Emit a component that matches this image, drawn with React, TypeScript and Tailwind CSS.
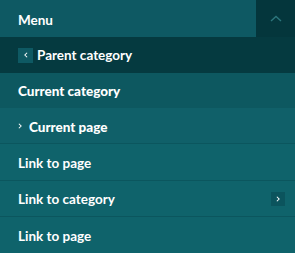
import React from "react";

const Chev = ({ dir, className }: { dir: "left" | "right" | "up"; className?: string }) => {
  const d =
    dir === "left" ? "M5.5 2 L2.5 5 L5.5 8" : dir === "right" ? "M2.5 2 L5.5 5 L2.5 8" : "M1 6 L6 1.5 L11 6";
  const vb = dir === "up" ? "0 0 12 7" : "0 0 8 10";
  return (
    <svg viewBox={vb} className={className} fill="none" stroke="currentColor" strokeWidth={1.4}>
      <path d={d} />
    </svg>
  );
};

export default function App() {
  return (
    <div
      className="w-[295px] h-[253px] overflow-hidden text-white text-[13.5px] bg-[#0f636b]"
      style={{ fontFamily: 'Lato, "Noto Sans", sans-serif' }}
    >
      <div className="flex h-[37px]">
        <div className="flex-1 flex items-center pl-[18px] pt-[3px] bg-[#0e5963] font-bold">Menu</div>
        <div className="w-[39px] flex items-center justify-center bg-[#04363c] text-[#2c767c]">
          <Chev dir="up" className="w-[12px] h-[7px]" />
        </div>
      </div>
      <div className="flex items-center h-[36px] bg-[#053a40] pl-[18px] font-bold">
        <div className="w-[15px] h-[15px] bg-[#0e5963] flex items-center justify-center mr-[4px]">
          <Chev dir="left" className="w-[6px] h-[8px]" />
        </div>
        Parent category
      </div>
      <div className="flex items-center h-[35px] bg-[#0d5860] pl-[18px] pt-[2px] font-black">Current category</div>
      <div className="flex items-center h-[36px] bg-[#106069] pl-[17px] pt-[3px] font-black border-b border-[#0b565e]">
        <Chev dir="right" className="w-[6px] h-[8px] mr-[6px] -mt-[2px]" />
        Current page
      </div>
      <div className="flex items-center h-[37px] pl-[18px] pt-[2px] font-bold border-b border-[#0b565e]">Link to page</div>
      <div className="flex items-center h-[36px] pl-[18px] pr-[10px] pt-[2px] font-bold border-b border-[#0b565e]">
        <span className="flex-1">Link to category</span>
        <div className="w-[14px] h-[14px] bg-[#0b545d] flex items-center justify-center -mt-[2px]">
          <Chev dir="right" className="w-[6px] h-[8px]" />
        </div>
      </div>
      <div className="flex items-center h-[35px] pl-[18px] pt-[3px] font-bold">Link to page</div>
    </div>
  );
}
